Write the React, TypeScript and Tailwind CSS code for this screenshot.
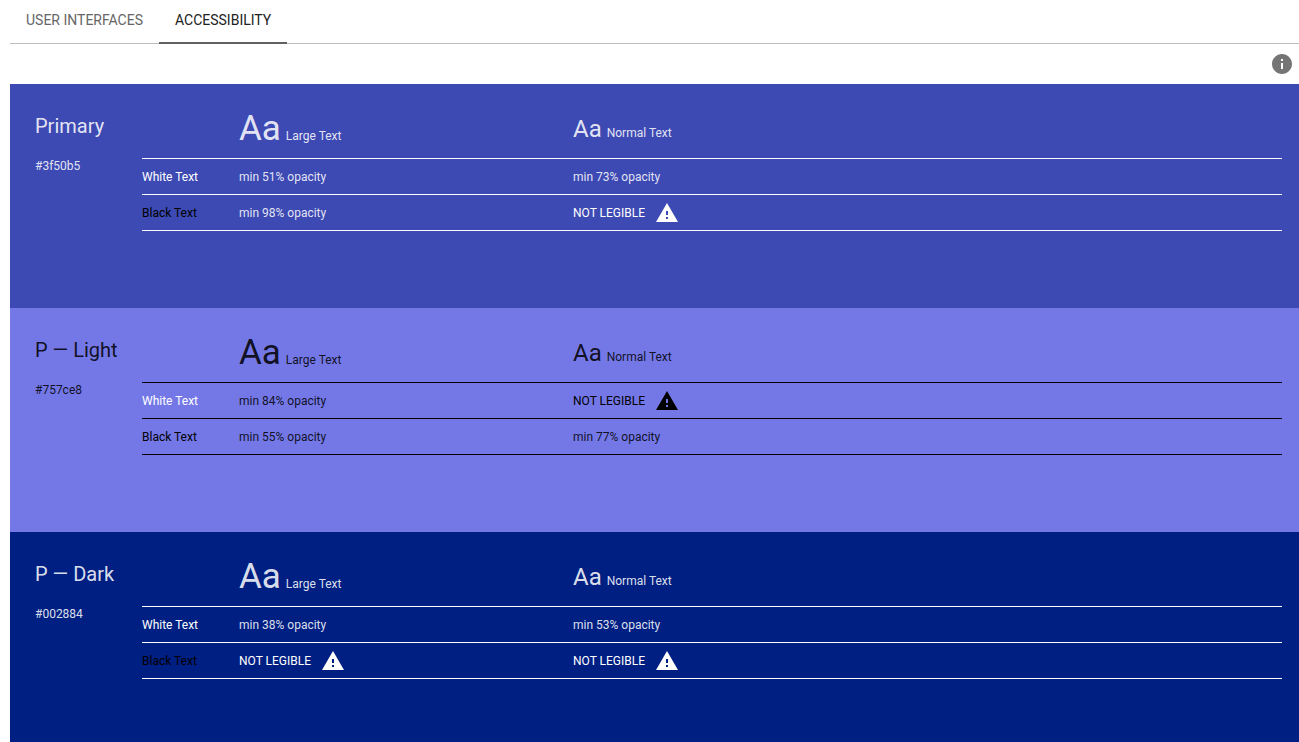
import { useState } from 'react';
import clsx from 'clsx';
import { MdInfo, MdWarning } from 'react-icons/md';

interface Swatch {
  name: string;
  hex: string;
  bg: string;
  dark: boolean; // dark background, so white foreground
  // min opacity in percent for [large, normal], null when not legible
  white: (number | null)[];
  black: (number | null)[];
}

const swatches: Swatch[] = [
  { name: 'Primary', hex: '#3f50b5', bg: 'bg-[#3d4ab3]', dark: true, white: [51, 73], black: [98, null] },
  { name: 'P — Light', hex: '#757ce8', bg: 'bg-[#7478e7]', dark: false, white: [84, null], black: [55, 77] },
  { name: 'P — Dark', hex: '#002884', bg: 'bg-[#001f83]', dark: true, white: [38, 53], black: [null, null] },
];

const tabs = ['User Interfaces', 'Accessibility'];

function Legibility({ value, dark }: { value: number | null; dark: boolean }) {
  if (value === null) {
    return (
      <span className={clsx('flex items-center gap-2.5', dark ? 'text-white' : 'text-black')}>
        NOT LEGIBLE
        <MdWarning className="size-6" aria-hidden="true" />
      </span>
    );
  }
  return <>min {value}% opacity</>;
}

function SwatchPanel({ swatch }: { swatch: Swatch }) {
  const { name, hex, bg, dark, white, black } = swatch;
  const line = clsx('[&>*]:border-b', dark ? '[&>*]:border-white' : '[&>*]:border-black');

  return (
    <section className={clsx('flex h-56 pl-[25px] pr-[17px]', bg, dark ? 'text-white/87' : 'text-black/87')}>
      <div className="w-[107px] shrink-0 pt-7">
        <h2 className="text-xl leading-7">{name}</h2>
        <p className="pt-4 text-xs leading-5">{hex}</p>
      </div>
      <div className="grow">
        <table className="w-full table-fixed border-separate border-spacing-0 text-left text-xs">
          <thead>
            <tr className={clsx('h-[75px]', line)}>
              <td className="w-[97px]" />
              <th scope="col" className="w-[334px] pt-4 font-normal">
                <span className="text-[35px] leading-10">Aa</span> <span className="pl-0.5">Large Text</span>
              </th>
              <th scope="col" className="pt-4 font-normal">
                <span className="text-2xl leading-10">Aa</span> <span className="pl-0.5">Normal Text</span>
              </th>
            </tr>
          </thead>
          <tbody>
            <tr className={clsx('h-9', line)}>
              <th scope="row" className="font-normal text-white">White Text</th>
              {white.map((value, i) => (
                <td key={i}><Legibility value={value} dark={dark} /></td>
              ))}
            </tr>
            <tr className={clsx('h-9', line)}>
              <th scope="row" className="font-normal text-black">Black Text</th>
              {black.map((value, i) => (
                <td key={i}><Legibility value={value} dark={dark} /></td>
              ))}
            </tr>
          </tbody>
        </table>
      </div>
    </section>
  );
}

export default function App() {
  const [active, setActive] = useState(1);

  return (
    <main className="h-screen overflow-hidden bg-white pl-2.5 font-['Roboto',sans-serif]">
      <nav className="flex h-11 border-b border-[#bdbdbd]">
        {tabs.map((tab, i) => (
          <button
            key={tab}
            type="button"
            onClick={() => setActive(i)}
            className={clsx(
              '-mb-px border-b-2 px-4 pb-0.5 text-sm uppercase',
              i === active ? 'border-[#616161] text-[#212121]' : 'border-transparent text-[#666666]',
            )}
          >
            {tab}
          </button>
        ))}
      </nav>
      <div className="flex h-10 items-center justify-end pr-[5px]">
        <button type="button" aria-label="Info" className="text-[#757575]">
          <MdInfo className="size-6" />
        </button>
      </div>
      {swatches.map((swatch) => (
        <SwatchPanel key={swatch.hex} swatch={swatch} />
      ))}
    </main>
  );
}
